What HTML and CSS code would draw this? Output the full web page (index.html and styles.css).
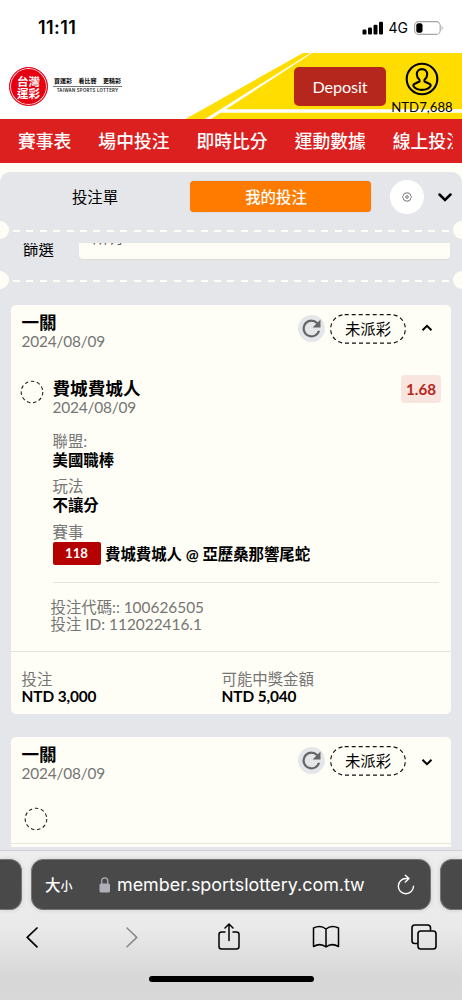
FILE: index.html
```html
<!DOCTYPE html>
<html lang="zh-Hant">
<head>
<meta charset="utf-8">
<title>台灣運彩</title>
<link rel="stylesheet" href="styles.css">
</head>
<body>
<div class="phone">
  <div class="status">
    <span class="clock">11:11</span>
    <div class="signals">
      <svg width="22" height="14" viewBox="0 0 22 14"><rect x="0.5" y="8.5" width="4" height="5" rx="1.2"/><rect x="6" y="6.5" width="4" height="7" rx="1.2"/><rect x="11.500" y="3.800" width="4" height="9.700" rx="1.2"/><rect x="17" y="0.800" width="4" height="12.700" rx="1.2"/></svg>
      <span class="net">4G</span>
      <svg width="30" height="14" viewBox="0 0 30 14"><rect x="0.6" y="0.6" width="25.600" height="12.800" rx="4" fill="none" stroke="#a5a5a5" stroke-width="1.1"/><rect x="2.300" y="2.200" width="6.200" height="9.600" rx="2"/><path d="M27.600 4.800v4.600c1.400-.8 1.400-3.800 0-4.600z" fill="#a5a5a5"/></svg>
    </div>
  </div>

  <header class="header">
    <svg class="swoosh" width="462" height="66" viewBox="0 0 462 66"><path d="M303 0H462V66H185.500z" fill="#fd0"/><path d="M310.500 0H312.200L226 56.200H462V59.700H220.500L211 66H205z" fill="#fff"/></svg>
    <div class="brand">
      <div class="seal"><span>台灣</span><span>運彩</span></div>
      <div class="slogan"><div class="slogan-zh"><span>買運彩</span><span>看比賽</span><span>更精彩</span></div><div class="slogan-en">TAIWAN SPORTS LOTTERY</div></div>
    </div>
    <div class="deposit">Deposit</div>
    <div class="account">
      <svg width="34" height="34" viewBox="0 0 34 34" fill="none" stroke="#000" stroke-width="2.100"><circle cx="17" cy="17" r="15.300"/><path d="M14.500 17.800c-1.800-1.600-2.700-3.500-2.700-5.500 0-3.200 2.200-5.200 5.200-5.200s5.200 2 5.200 5.200c0 2-.9 3.900-2.700 5.500v1.700l4.700 2.200c1.200.6 1.700 1.600 1.200 2.600-1.400 2.400-4.700 3.600-8.400 3.600s-7-1.200-8.400-3.600c-.5-1 0-2 1.200-2.600l4.700-2.200z" stroke-linejoin="round"/></svg>
      <span>NTD7,688</span>
    </div>
  </header>

  <nav class="nav"><span>賽事表</span><span>場中投注</span><span>即時比分</span><span>運動數據</span><span>線上投注</span></nav>

  <main class="panel">
    <div class="tabs">
      <div class="tab">投注單</div>
      <div class="tab tab-on">我的投注</div>
      <div class="gear"><svg width="10" height="10" viewBox="0 0 10 10" fill="none" stroke="#555" stroke-width=".8"><path d="M4.100 1.200 5 .6l.9.600L7 1l.5 1 1.100.4-.1 1.200.8.900v1l-.8.900.1 1.200-1.100.4L7 9l-1.100-.2-.9.600-.9-.6L3 9l-.5-1-1.100-.4.1-1.200-.8-.9v-1l.8-.9-.1-1.200 1.100-.4L3 1z"/><circle cx="5" cy="5" r="1.300"/></svg></div>
      <svg class="tabs-chev" width="14" height="9" viewBox="0 0 14 9"><path d="M1.500 1.500 7 7l5.500-5.500" fill="none" stroke="#000" stroke-width="2.500" stroke-linecap="round"/></svg>
    </div>
    <div class="perf"><i></i><b></b><i></i></div>
    <div class="filter">
      <span class="filter-label">篩選</span>
      <div class="select"><span>所有</span></div>
    </div>
    <div class="perf"><i></i><b></b><i></i></div>

    <section class="card">
      <div class="card-head">
        <div class="heading"><div class="title">一關</div><div class="gray date">2024/08/09</div></div>
        <div class="reload"><svg width="27" height="27" viewBox="0 0 24 24" fill="#666"><path d="M17.650 6.350A7.950 7.950 0 0 0 12 4a8 8 0 1 0 7.730 10h-2.080A6 6 0 1 1 12 6c1.660 0 3.140.69 4.220 1.780L13 11h7V4z"/></svg></div>
        <div class="pill"><svg width="76" height="30" viewBox="0 0 76 30"><rect x=".7" y=".7" width="74.600" height="28.400" rx="14" fill="none" stroke="#111" stroke-width="1.200" stroke-dasharray="4 3"/></svg><span>未派彩</span></div>
        <svg class="chev" width="12" height="8" viewBox="0 0 12 8"><path d="m1.500 6.200 4.500-4.400 4.500 4.400" fill="none" stroke="#000" stroke-width="2"/></svg>
      </div>
      <div class="leg">
        <svg class="ring" width="24" height="24" viewBox="0 0 24 24"><circle cx="12" cy="12" r="10.800" fill="none" stroke="#222" stroke-width="1.100" stroke-dasharray="3.500 2.670"/></svg>
        <div class="detail">
          <div class="title">費城費城人</div><div class="gray date">2024/08/09</div>
          <div class="gray league">聯盟:</div><div class="strong">美國職棒</div>
          <div class="gray play">玩法</div><div class="strong">不讓分</div>
          <div class="gray game">賽事</div>
          <div class="match"><span class="code">118</span><span>費城費城人 @ 亞歷桑那響尾蛇</span></div>
          <div class="ids"><div>投注代碼:: 100626505</div><div>投注 ID: 112022416.1</div></div>
        </div>
        <div class="odds">1.68</div>
      </div>
      <div class="totals">
        <div><div class="gray">投注</div><div class="money">NTD 3,000</div></div>
        <div><div class="gray">可能中獎金額</div><div class="money">NTD 5,040</div></div>
      </div>
    </section>

    <section class="card card-next">
      <div class="card-head">
        <div class="heading"><div class="title">一關</div><div class="gray date">2024/08/09</div></div>
        <div class="reload"><svg width="27" height="27" viewBox="0 0 24 24" fill="#666"><path d="M17.650 6.350A7.950 7.950 0 0 0 12 4a8 8 0 1 0 7.730 10h-2.080A6 6 0 1 1 12 6c1.660 0 3.140.69 4.220 1.780L13 11h7V4z"/></svg></div>
        <div class="pill"><svg width="76" height="30" viewBox="0 0 76 30"><rect x=".7" y=".7" width="74.600" height="28.400" rx="14" fill="none" stroke="#111" stroke-width="1.200" stroke-dasharray="4 3"/></svg><span>未派彩</span></div>
        <svg class="chev chev-down" width="12" height="8" viewBox="0 0 12 8"><path d="m1.500 1.800 4.500 4.400 4.500-4.400" fill="none" stroke="#000" stroke-width="2"/></svg>
      </div>
      <div class="leg-next"><svg class="ring" width="24" height="24" viewBox="0 0 24 24"><circle cx="12" cy="12" r="10.800" fill="none" stroke="#222" stroke-width="1.100" stroke-dasharray="3.500 2.670"/></svg></div>
    </section>
  </main>

  <footer class="browser">
    <div class="address-row">
      <div class="side side-left"></div>
      <div class="address">
        <span class="aa">大<small>小</small></span>
        <svg class="lock" width="12" height="16" viewBox="0 0 12 16"><rect x=".5" y="6.500" width="10.500" height="9" rx="1.500" fill="#b0afb8"/><path d="M2.700 7V4.300a3.050 3.400 0 0 1 6.100 0V7" fill="none" stroke="#b0afb8" stroke-width="1.300"/></svg>
        <span class="url">member.sportslottery.com.tw</span>
        <svg class="refresh" width="20" height="22" viewBox="0 0 20 22" fill="none" stroke="#fff" stroke-width="1.400" stroke-linecap="round" stroke-linejoin="round"><path d="M17.500 12.200A7.600 7.600 0 1 1 10 4.500h2.800M9.300 1.200l3.700 3.400-3.700 3.500"/></svg>
      </div>
      <div class="side side-right"></div>
    </div>
    <div class="tools">
      <svg width="14" height="22" viewBox="0 0 14 22"><path d="M12 2 2.200 11.400 12 20.800" fill="none" stroke="#000" stroke-width="1.700" stroke-linecap="round" stroke-linejoin="round"/></svg>
      <svg width="14" height="22" viewBox="0 0 14 22"><path d="m2 2 9.800 9.400L2 20.800" fill="none" stroke="#888" stroke-width="1.500" stroke-linecap="round" stroke-linejoin="round"/></svg>
      <svg width="24" height="30" viewBox="0 0 24 30" fill="none" stroke="#000" stroke-width="1.500" stroke-linecap="round" stroke-linejoin="round"><path d="M8 10H4.500A2.500 2.500 0 0 0 2 12.500v12A2.500 2.500 0 0 0 4.500 27h15a2.500 2.500 0 0 0 2.500-2.500v-12a2.500 2.500 0 0 0-2.500-2.500H16M12 18.500V2M8 6l4-4 4 4"/></svg>
      <svg width="28" height="24" viewBox="0 0 28 24" fill="none" stroke="#000" stroke-width="1.500" stroke-linejoin="round"><path d="M14 4C10.500 1 5.500 1 1.500 3v18.500c4-2.300 9-2.300 12.500.5 3.500-2.800 8.500-2.800 12.500-.5V3C22.500 1 17.500 1 14 4zv18"/></svg>
      <svg width="26" height="26" viewBox="0 0 26 26" fill="none" stroke="#000" stroke-width="1.600"><path d="M7 19.500H3.800A2.800 2.800 0 0 1 1 16.700V3.800A2.800 2.800 0 0 1 3.800 1h12.900a2.800 2.800 0 0 1 2.800 2.800V7"/><rect x="7" y="7" width="18" height="18" rx="2.800"/></svg>
    </div>
    <div class="home"></div>
  </footer>
</div>
</body>
</html>
```
FILE: styles.css
```css
* { box-sizing: border-box; }
body { margin: 0; background: #fffef6; font-family: Lato, "Noto Sans CJK TC", sans-serif; font-size: 15.400px; color: #000; }
svg { display: block; flex: none; }
.phone { width: 462px; height: 1000px; display: flex; flex-direction: column; overflow: hidden; white-space: nowrap; }

.status { height: 53px; flex: none; background: #fff; display: flex; justify-content: space-between; padding: 18px 18px 0 38px; font-family: Inter, sans-serif; line-height: 20px; }
.clock { font-size: 18px; font-weight: 600; letter-spacing: .4px; }
.signals { display: flex; padding-top: 3px; height: 20px; }
.net { font-size: 14px; font-weight: 400; line-height: 14px; margin: 0 6px 0 5px; }

.header { height: 66px; flex: none; position: relative; background: #fff; display: flex; }
.swoosh { position: absolute; left: 0; top: 0; }
.brand { display: flex; width: 294px; padding: 14px 0 0 9px; position: relative; }
.seal { width: 39px; height: 39px; border-radius: 50%; background: #e60012; border: 1px solid #e60012; box-shadow: inset 0 0 0 1px #ffd9dc; color: #fff; font: 700 11.500px/12px "Noto Sans CJK TC", sans-serif; display: flex; flex-direction: column; align-items: center; justify-content: center; }
.slogan { margin: 10px 0 0 5px; width: 69px; }
.slogan-zh { display: flex; justify-content: space-between; padding: 0 1px; height: 9.500px; border-bottom: 1px solid #777; font: 700 6px/7px "Noto Sans CJK TC", sans-serif; }
.slogan-en { font: 600 4.300px/8px Inter, sans-serif; letter-spacing: .26px; text-align: center; color: #222; }
.deposit { position: relative; margin-top: 14px; width: 92px; height: 39px; border-radius: 5px; background: #b5271c; color: #fff; font-size: 16.200px; letter-spacing: -.1px; line-height: 40px; text-align: center; }
.account { position: relative; width: 72px; padding-top: 9px; display: flex; flex-direction: column; align-items: center; font-size: 13.200px; line-height: 22px; }

.nav { width: 462px; height: 44px; flex: none; background: #dc1f1f; border-right: 9px solid #dc1f1f; color: #fff; display: flex; gap: 27px; padding-left: 18px; overflow: hidden; font-size: 17.800px; font-weight: 500; line-height: 45px; }

.panel { margin-top: 9px; height: 678px; flex: none; background: #e4e6e9; border-radius: 10px 10px 0 0; overflow: hidden; }
.tabs { height: 49px; display: flex; align-items: center; }
.tab { width: 190px; text-align: center; line-height: 32px; }
.tab-on { width: 181px; height: 31px; padding-right: 9px; border-radius: 4px; background: #ff7b00; color: #fff; font-weight: 500; box-shadow: 0 0 1px #999; }
.gear { width: 34px; height: 34px; border-radius: 50%; background: #fff; margin-left: 19px; display: flex; align-items: center; justify-content: center; }
.tabs-chev { margin: 2px 0 0 14px; }
.perf { height: 18px; display: flex; align-items: center; justify-content: space-between; }
.perf i { width: 9px; height: 18px; background: #fffef6; border-radius: 0 9px 9px 0; }
.perf i:last-child { border-radius: 9px 0 0 9px; }
.perf b { width: 436px; height: 2px; margin: 2px 0 0; background: repeating-linear-gradient(90deg, #fffef6 0 7px, transparent 7px 13.400px); }
.filter { height: 28px; margin-top: 4px; display: flex; overflow: hidden; }
.filter-label { width: 79px; padding-left: 23px; line-height: 12px; }
.select { width: 371px; height: 16px; background: #fffef6; border-radius: 0 0 4px 4px; overflow: hidden; box-shadow: 0 1px 1px #dcdcd8; padding-left: 14px; color: #555; }
.select span { display: block; margin-top: -15px; line-height: 18px; }

.card { width: 440px; margin: 16px 0 0 11px; background: #fffef6; border-radius: 5px; }
.card-head { height: 66px; padding: 9px 0 0 10.500px; display: flex; align-items: flex-start; }
.heading { width: 276.500px; }
.title { font-size: 17.600px; font-weight: 700; line-height: 18px; }
.gray { color: #757575; line-height: 18px; }
.date { letter-spacing: -.17px; }
.strong { font-weight: 700; line-height: 20px; }
.reload { width: 27px; height: 27px; margin-top: 1px; border-radius: 50%; background: #e4e6e9; display: flex; align-items: center; justify-content: center; }
.pill { position: relative; width: 76px; height: 30px; margin-left: 5px; text-align: center; line-height: 30px; }
.pill svg { position: absolute; left: 0; top: 0; }
.chev { margin: 10px 0 0 14.500px; }
.chev-down { margin-top: 12px; }
.leg { height: 280px; padding: 9px 0 0 9px; display: flex; align-items: flex-start; }
.ring { margin-top: -.5px; }
.detail { margin-left: 8.500px; width: 348.500px; }
.league { margin-top: 16px; }
.play { margin-top: 7px; }
.game { margin-top: 8px; }
.match { display: flex; height: 23px; margin-top: 1px; font-weight: 700; line-height: 24px; }
.code { width: 48px; margin-right: 4.500px; border-radius: 2px; background: #b50000; color: #fff; text-align: center; font-size: 13.200px; line-height: 23px; }
.ids { margin-top: 17px; width: 386px; border-top: 1px solid #e6e4df; padding-top: 16px; color: #757575; line-height: 17px; }
.ids div { margin-left: -2px; }
.odds { width: 40px; height: 28px; margin-top: -5px; border-radius: 4px; background: #f8e5df; color: #b5271c; font-size: 15.200px; font-weight: 700; line-height: 28px; text-align: center; }
.totals { height: 63px; border-top: 1px solid #e6e4df; padding: 18px 0 0 10.500px; display: flex; }
.totals > div { width: 200px; }
.money { font-weight: 700; line-height: 17px; letter-spacing: -.1px; }
.card-next { margin-top: 23px; height: 110px; border-radius: 5px 5px 0 0; }
.leg-next { height: 41px; padding: 4px 0 0 13px; border-bottom: 1px solid #e6e4df; }

.browser { flex: none; height: 150px; border-top: 1px solid #cfd0d3; background: linear-gradient(#eee 0, #eaeaea 75px, #d8d7d7 125px, #d8d8d8); }
.address-row { display: flex; gap: 9px; padding-top: 8px; height: 59px; }
.side, .address { height: 51px; background: #494949; border-radius: 12px; box-shadow: 0 0 5px #0002; border: 1px solid #777; }
.side-left { width: 22px; border-radius: 0 12px 12px 0; border-left: 0; }
.side-right { width: 22px; border-radius: 12px 0 0 12px; border-right: 0; }
.address { width: 400px; display: flex; align-items: center; color: #fff; padding-left: 13px; }
.aa { width: 54px; font: 500 15.500px/30px "Noto Sans CJK TC", sans-serif; }
.aa small { font-size: 12px; }
.url { width: 270px; margin-left: 6px; font: 400 17.900px/48px Inter, sans-serif; }
.refresh { margin-left: 9px; }
.tools { display: grid; grid-template-columns: 100px 96px 97px 98px; justify-content: center; justify-items: center; align-items: center; height: 34px; margin-top: 10px; }
.tools { grid-template-columns: 64px 136px 57px 138px 58px; justify-content: start; }
.home { width: 165px; height: 6px; margin: 22px auto 0; border-radius: 3px; background: #000; }
```
